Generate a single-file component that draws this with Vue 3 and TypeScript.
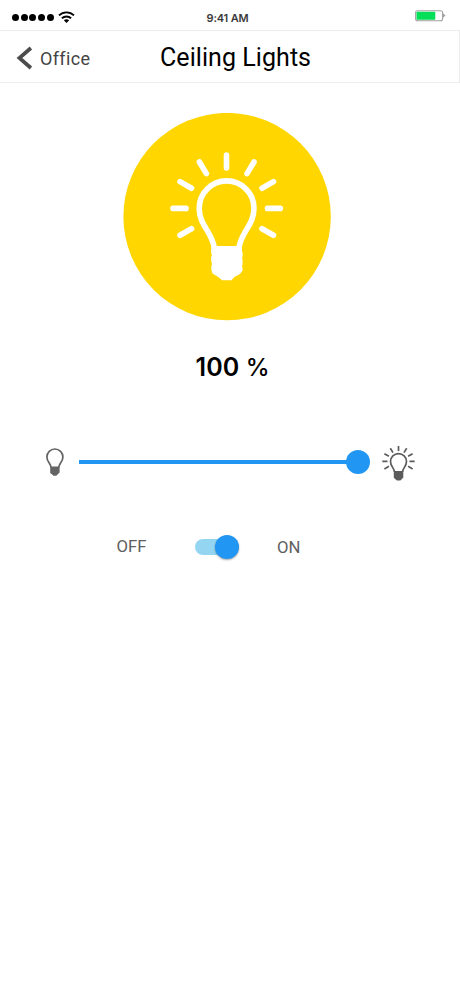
<script setup lang="ts">
import { ref } from 'vue'

const room = 'Office'
const device = 'Ceiling Lights'
const level = ref<number>(100)
const isOn = ref<boolean>(true)

const toggle = (): void => {
  isOn.value = !isOn.value
}
</script>

<template>
  <main class="screen">
    <div class="status">
      <div class="signal">
        <i v-for="n in 5" :key="n" class="dot"></i>
        <svg class="wifi" width="17" height="12" viewBox="0 0 17 12">
          <g fill="none" stroke="#000" stroke-width="1.9">
            <path d="M1 4.4C5.2.3 11.8.3 16 4.4" />
            <path d="M3.9 7.3C6.5 4.8 10.5 4.8 13.1 7.3" />
          </g>
          <path d="M5.8 9.3Q8.5 7.2 11.2 9.3L8.5 12Z" />
        </svg>
      </div>
      <span class="time">9:41 AM</span>
      <svg class="battery" width="31" height="12" viewBox="0 0 31 12">
        <rect x=".6" y=".7" width="27" height="10" rx="2" fill="#fff" stroke="#a3a1a3" stroke-width="1.1" />
        <rect x="1.5" y="1.7" width="18.8" height="8" rx=".8" fill="#04de58" />
        <path d="M27.8 3L30.5 5.5L27.8 8Z" fill="#a3a1a3" />
      </svg>
    </div>

    <header class="bar">
      <button class="back">
        <svg width="17" height="24" viewBox="0 0 17 24">
          <path d="M14.9 2L3.4 12L14.9 22" fill="none" stroke="#4c4c4c" stroke-width="3.7" />
        </svg>
        <span>{{ room }}</span>
      </button>
      <h1 class="title">{{ device }}</h1>
    </header>

    <svg class="lamp" width="208" height="208" viewBox="123 113 208 208">
      <circle cx="227.1" cy="216.6" r="103.7" fill="#ffd600" />
      <g fill="none" stroke="#fff" stroke-width="5.6" stroke-linecap="round">
        <path d="M226.5 155V168M199.4 162L206.4 173.6M254 162L247 173.6M180 181.6L191.5 188.2M273.5 181.6L262 188.2M173 208.4H186M267.5 208.4H280.3M180 235.2L191.5 228.7M273.5 235.2L262 228.7" />
        <path stroke-linecap="butt" d="M214.3 248C213.4 241 211 237 207.5 231C203.5 224.5 199.2 218 199.2 208.3A27.4 27.4 0 0 1 254 208.3C254 218 249.7 224.5 245.7 231C242.2 237 239.8 241 238.9 248" />
      </g>
      <path d="M211.5 246H242V251.5L242.6 253V256.5L242 258L242.6 260V264L242 266L242.6 268V270.5L240 274L234.5 277L231.5 280.3H222L219 277.5L212.5 273.5L211.4 270V266L212 264L211.2 261V257L211.8 255L211 252Z" fill="#fff" />
    </svg>

    <p class="level">{{ level }} <span>%</span></p>

    <div class="dimmer">
      <svg class="dim" width="20" height="30" viewBox="0 0 20 30">
        <path d="M6 20.5C5.8 16.4 1.9 14.8 1.9 9.9A8 7.9 0 0 1 17.9 9.9C17.9 14.8 14 16.4 13.8 20.5" fill="none" stroke="#646464" stroke-width="1.7" />
        <path d="M5.2 19.4H14.6V25.5L12.3 27.8L11.4 28.8H8.4L7.5 27.8L5.2 26Z" fill="#646464" />
      </svg>
      <div class="track">
        <div class="fill" :style="{ width: level + '%' }"></div>
        <i class="handle"></i>
      </div>
      <svg class="bright" width="34" height="37" viewBox="382 445 34 37">
        <g fill="none" stroke="#5c5c5c" stroke-width="1.7">
          <path d="M394.5 472C394.2 468 390.5 466.3 390.5 461.5A8 7.9 0 0 1 406.5 461.5C406.5 466.3 402.8 468 402.5 472" />
          <path d="M398.5 446V451M390.3 448.3L393 452.6M406.7 448.3L404 452.6M384.4 453.7L388.9 456.3M412.6 453.7L408.1 456.3M382.3 461.3H387.5M409.5 461.3H414.7M384.4 468.9L388.9 466.3M412.6 468.9L408.1 466.3" />
        </g>
        <path d="M393.8 471H403.3V477.6L400.4 480.6H396.8L393.8 477.8Z" fill="#5c5c5c" />
      </svg>
    </div>

    <div class="power">
      <span class="off">OFF</span>
      <button class="switch" :class="{ on: isOn }" @click="toggle"><i></i></button>
      <span class="onlabel">ON</span>
    </div>
  </main>
</template>

<style>
body {
  margin: 0;
  background: #fff;
}
</style>

<style scoped>
.screen {
  box-sizing: border-box;
  width: 460px;
  height: 996px;
  display: flex;
  flex-direction: column;
  overflow: hidden;
  background: #fff;
  font-family: Roboto, "Liberation Sans", sans-serif;
}
button {
  border: 0;
  padding: 0;
  background: none;
  font: inherit;
}
.status {
  height: 30px;
  display: grid;
  grid-template-columns: 206.5px 1fr 45px;
}
.signal {
  display: flex;
  align-items: center;
  height: 12px;
  gap: 1.7px;
  padding: 11px 0 0 12px;
}
.dot {
  width: 7px;
  height: 7px;
  border-radius: 50%;
  background: #000;
}
.wifi {
  margin-left: 2.5px;
}
.time {
  padding-top: 11px;
  font: 600 11px/14px Inter, sans-serif;
  letter-spacing: -0.15px;
  color: #3a3a3a;
  white-space: nowrap;
}
.battery {
  margin-top: 10px;
}
.bar {
  box-sizing: border-box;
  height: 53px;
  border: 1px solid #ececec;
  border-width: 1px 1px 1px 0;
  display: flex;
}
.back {
  width: 160px;
  display: flex;
  align-items: center;
  padding-left: 16px;
  padding-top: 3px;
  gap: 7px;
  box-sizing: border-box;
  font-size: 18px;
  letter-spacing: 0.35px;
  color: #444;
}
.title {
  margin: 0;
  font: 400 25px/53px Roboto, sans-serif;
  letter-spacing: 0.06px;
  color: #000;
  white-space: nowrap;
}
.lamp {
  margin: 30px 0 0 123px;
  flex: none;
}
.level {
  margin: 29px 0 0 195.5px;
  font: 600 25px/34px Inter, sans-serif;
  letter-spacing: 0.1px;
  color: #000;
  white-space: nowrap;
}
.level span {
  font-weight: 500;
  font-size: 24px;
}
.dimmer {
  height: 38px;
  margin-top: 58px;
  display: flex;
  align-items: center;
  padding-left: 45px;
}
.track {
  position: relative;
  width: 279px;
  height: 4px;
  margin: 0 24px 0 14px;
}
.fill {
  height: 4px;
  background: #2196f3;
}
.handle {
  position: absolute;
  top: -10px;
  right: -12px;
  width: 24px;
  height: 24px;
  border-radius: 50%;
  background: #2196f3;
}
.bright {
  margin-top: 3px;
}
.power {
  height: 30px;
  margin-top: 51px;
  display: grid;
  grid-template-columns: 78.5px 82px 60px;
  align-items: center;
  padding-left: 116.5px;
  font-size: 16.7px;
  color: #606060;
}
.off {
  padding-bottom: 2px;
}
.switch {
  width: 43.5px;
  height: 16px;
  border-radius: 8px;
  background: #cfcfcf;
  display: flex;
  align-items: center;
}
.switch.on {
  background: #94d6f2;
  justify-content: flex-end;
}
.switch i {
  flex: none;
  width: 24px;
  height: 24px;
  border-radius: 50%;
  background: #bbb;
  box-shadow: 0 1px 2px rgba(0, 0, 0, 0.35);
}
.switch.on i {
  background: #2196f3;
}
</style>
